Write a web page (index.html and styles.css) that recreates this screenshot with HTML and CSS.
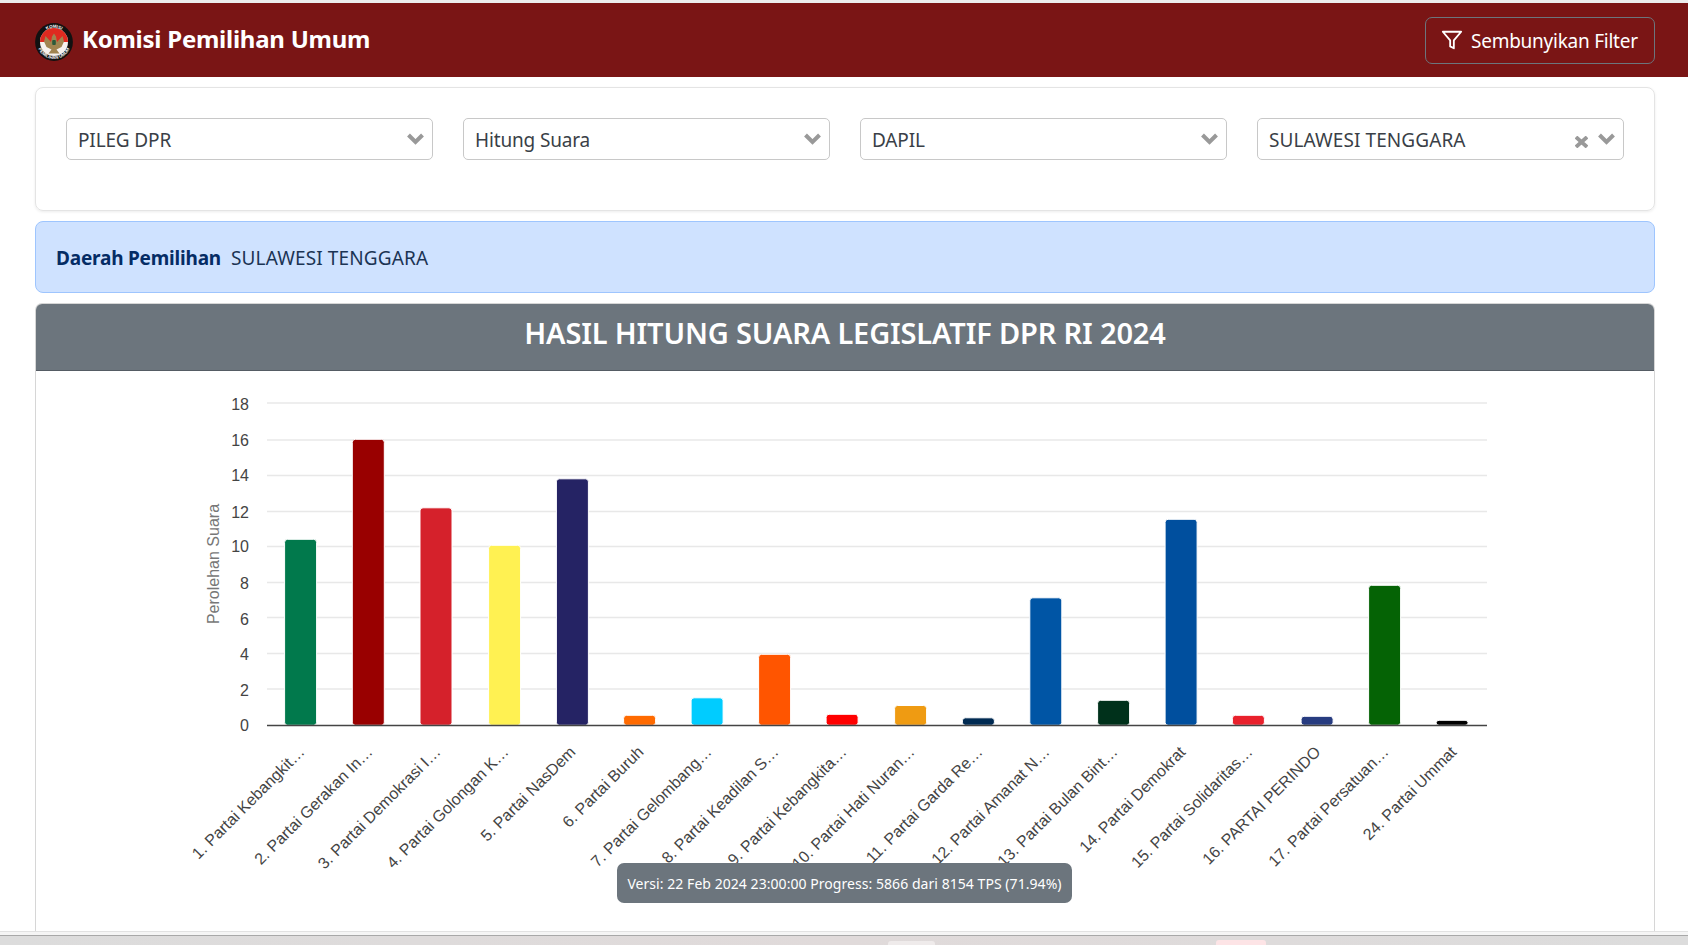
FILE: index.html
```html
<!DOCTYPE html>
<html lang="id">
<head>
<meta charset="utf-8">
<title>Komisi Pemilihan Umum</title>
<link rel="stylesheet" href="styles.css">
</head>
<body>
<div class="top-strip"></div>
<header class="navbar">
  <div class="brand">
    <svg class="logo" viewBox="0 0 38 38" aria-hidden="true">
      <defs>
        <path id="arcTop" d="M4.800 19A14.200 14.200 0 0 1 33.200 19"/>
        <path id="arcBottom" d="M2 19A17 17 0 0 0 36 19"/>
      </defs>
      <circle cx="19" cy="19" r="18.900" fill="#111"/>
      <circle cx="19" cy="19" r="14" fill="#f6f1ee"/>
      <path d="M5 19A14 14 0 0 1 33 19Z" fill="#df2a20"/>
      <path d="M19 10.500l2 3 1 5.500 5.500-6 1.500 5.500-2.500 5.500-5 2.500 3 4h-11l3-4-5-2.500-2.500-5.500 1.500-5.500 5.500 6 1-5.500z" fill="#a08450"/>
      <rect x="17.200" y="17" width="3.600" height="5" rx="1" fill="#2b5a3a"/>
      <text class="logo-text"><textPath href="#arcTop" startOffset="50%" text-anchor="middle">KOMISI</textPath></text>
      <text class="logo-text"><textPath href="#arcBottom" startOffset="50%" text-anchor="middle">PEMILIHAN UMUM</textPath></text>
    </svg>
    <span class="brand-name">Komisi Pemilihan Umum</span>
  </div>
  <button class="filter-btn" type="button">
    <svg class="funnel" viewBox="0 0 24 24" aria-hidden="true"><polygon points="22 3 2 3 10 12.460 10 19 14 21 14 12.460 22 3"/></svg>
    <span class="filter-label">Sembunyikan Filter</span>
  </button>
</header>
<main class="content">
  <section class="filter-card">
    <div class="select"><span class="select-value">PILEG DPR</span><svg class="chevron" viewBox="0 0 17 12"><path d="M1.500 2 8.500 9 15.500 2"/></svg></div>
    <div class="select"><span class="select-value">Hitung Suara</span><svg class="chevron" viewBox="0 0 17 12"><path d="M1.500 2 8.500 9 15.500 2"/></svg></div>
    <div class="select"><span class="select-value">DAPIL</span><svg class="chevron" viewBox="0 0 17 12"><path d="M1.500 2 8.500 9 15.500 2"/></svg></div>
    <div class="select"><span class="select-value select-value-wide">SULAWESI TENGGARA</span><svg class="clear" viewBox="0 0 13 12"><path d="M1 1 12 11M12 1 1 11"/></svg><svg class="chevron" viewBox="0 0 17 12"><path d="M1.500 2 8.500 9 15.500 2"/></svg></div>
  </section>
  <section class="alert"><strong>Daerah Pemilihan</strong><span>SULAWESI TENGGARA</span></section>
  <section class="chart-card">
    <h2 class="chart-title">HASIL HITUNG SUARA LEGISLATIF DPR RI 2024</h2>
    <div class="chart-body">
      <svg class="chart" viewBox="36 371 1618 560" role="img">
        <g class="grid">
          <line x1="267" x2="1487" y1="403" y2="403"/><line x1="267" x2="1487" y1="440" y2="440"/><line x1="267" x2="1487" y1="475.500" y2="475.500"/><line x1="267" x2="1487" y1="511.500" y2="511.500"/><line x1="267" x2="1487" y1="546.500" y2="546.500"/><line x1="267" x2="1487" y1="582.500" y2="582.500"/><line x1="267" x2="1487" y1="617.500" y2="617.500"/><line x1="267" x2="1487" y1="653.500" y2="653.500"/><line x1="267" x2="1487" y1="689" y2="689"/>
        </g>
        <g class="y-labels">
          <text x="249" y="410">18</text><text x="249" y="446">16</text><text x="249" y="481">14</text><text x="249" y="518">12</text><text x="249" y="552">10</text><text x="249" y="589">8</text><text x="249" y="625">6</text><text x="249" y="660">4</text><text x="249" y="696">2</text><text x="249" y="731">0</text>
        </g>
        <text class="y-title" transform="rotate(-90 219 564)" x="219" y="564">Perolehan Suara</text>
        <g class="bars">
          <rect x="285" y="540" width="32" height="186" fill="#01794c"/>
          <rect x="352.700" y="440" width="32" height="286" fill="#990000"/>
          <rect x="420.400" y="508.500" width="32" height="217.500" fill="#d5212b"/>
          <rect x="489" y="546" width="32" height="180" fill="#fff152"/>
          <rect x="556.800" y="479.500" width="32" height="246.500" fill="#252364"/>
          <rect x="624" y="716" width="32" height="10" fill="#ff6a00"/>
          <rect x="691.500" y="698.500" width="32" height="27.500" fill="#00ccff"/>
          <rect x="759" y="655" width="32" height="71" fill="#ff5500"/>
          <rect x="826.500" y="715" width="32" height="11" fill="#ff0000"/>
          <rect x="895" y="706.200" width="32" height="19.800" fill="#ef9b12"/>
          <rect x="962.800" y="718.500" width="32" height="7.500" fill="#002a52"/>
          <rect x="1030.200" y="598.500" width="32" height="127.500" fill="#0055a5"/>
          <rect x="1098" y="701" width="32" height="25" fill="#00311b"/>
          <rect x="1165.500" y="520" width="32" height="206" fill="#004f9e"/>
          <rect x="1232.800" y="716" width="32" height="10" fill="#e9212c"/>
          <rect x="1301.500" y="717" width="32" height="9" fill="#273c80"/>
          <rect x="1369" y="586" width="32" height="140" fill="#056305"/>
          <rect x="1436.500" y="721" width="32" height="5" fill="#000000"/>
        </g>
        <line class="axis" x1="267" x2="1487" y1="725.500" y2="725.500"/>
        <g class="x-labels">
          <text transform="rotate(-45 306 751)" x="306" y="751">1. Partai Kebangkit…</text>
          <text transform="rotate(-45 374 751)" x="374" y="751">2. Partai Gerakan In…</text>
          <text transform="rotate(-45 442 751)" x="442" y="751">3. Partai Demokrasi I…</text>
          <text transform="rotate(-45 510 751)" x="510" y="751">4. Partai Golongan K…</text>
          <text transform="rotate(-45 577 751)" x="577" y="751">5. Partai NasDem</text>
          <text transform="rotate(-45 645 751)" x="645" y="751">6. Partai Buruh</text>
          <text transform="rotate(-45 713 751)" x="713" y="751">7. Partai Gelombang…</text>
          <text transform="rotate(-45 780 751)" x="780" y="751">8. Partai Keadilan S…</text>
          <text transform="rotate(-45 848 751)" x="848" y="751">9. Partai Kebangkita…</text>
          <text transform="rotate(-45 916 751)" x="916" y="751">10. Partai Hati Nuran…</text>
          <text transform="rotate(-45 984 751)" x="984" y="751">11. Partai Garda Re…</text>
          <text transform="rotate(-45 1051 751)" x="1051" y="751">12. Partai Amanat N…</text>
          <text transform="rotate(-45 1119 751)" x="1119" y="751">13. Partai Bulan Bint…</text>
          <text transform="rotate(-45 1187 751)" x="1187" y="751">14. Partai Demokrat</text>
          <text transform="rotate(-45 1254 751)" x="1254" y="751">15. Partai Solidaritas…</text>
          <text transform="rotate(-45 1322 751)" x="1322" y="751">16. PARTAI PERINDO</text>
          <text transform="rotate(-45 1390 751)" x="1390" y="751">17. Partai Persatuan…</text>
          <text transform="rotate(-45 1458 751)" x="1458" y="751">24. Partai Ummat</text>
        </g>
      </svg>
      <div class="tooltip">Versi: 22 Feb 2024 23:00:00 Progress: 5866 dari 8154 TPS (71.94%)</div>
    </div>
  </section>
</main>
<div class="window-edge"></div>
<footer class="taskbar"><span class="task-tab"></span><span class="task-tab task-tab-pink"></span></footer>
</body>
</html>
```
FILE: styles.css
```css
* { box-sizing: border-box; }
html, body { margin: 0; height: 945px; overflow: hidden; background: #fff; }
body {
  display: flex;
  flex-direction: column;
  font-family: "Noto Sans", "Open Sans", sans-serif;
  color: #333;
}
.top-strip { height: 3px; background: #ececec; flex: none; }
.navbar {
  height: 74px;
  flex: none;
  background: #7a1515;
  display: flex;
  align-items: center;
  justify-content: space-between;
  padding: 0 33px 0 35px;
}
.brand { display: flex; align-items: center; gap: 9px; }
.logo { width: 38px; height: 38px; display: block; margin-top: 4px; }
.logo-text { font: 700 4.400px "Liberation Sans", sans-serif; fill: #fff; }
.brand-name { color: #fff; font-size: 24px; font-weight: 700; letter-spacing: -0.25px; margin-bottom: 4px; }
.filter-btn {
  width: 230px;
  height: 47px;
  border: 1px solid #6c757d;
  border-radius: 7px;
  background: transparent;
  color: #fff;
  font: 400 19px "Noto Sans", sans-serif;
  letter-spacing: -0.25px;
  display: flex;
  align-items: center;
  gap: 8px;
  padding: 0 0 0 15px;
}
.filter-label { padding-top: 2px; }
.funnel { width: 22px; height: 22px; fill: none; stroke: #fff; stroke-width: 2; stroke-linejoin: round; flex: none; }
.content {
  flex: 1;
  min-height: 0;
  display: flex;
  flex-direction: column;
  padding: 10px 33px 0 35px;
}
.filter-card {
  flex: none;
  height: 124px;
  border: 1px solid #e4e4e4;
  border-radius: 8px;
  box-shadow: 0 1px 3px rgba(0, 0, 0, .08);
  padding: 30px;
  display: grid;
  grid-template-columns: repeat(4, 1fr);
  gap: 30px;
  align-items: start;
}
.select {
  height: 42px;
  border: 1px solid #c8c8c8;
  border-radius: 5px;
  display: flex;
  align-items: center;
  padding: 0 8px 0 11px;
  font-size: 19px;
  color: #3a3f47;
}
.select-value { flex: 1; letter-spacing: -0.15px; position: relative; top: 1px; }
.select-value-wide { letter-spacing: 0.09px; }
.chevron { width: 17px; height: 12px; fill: none; stroke: #999; stroke-width: 4; flex: none; margin-top: -1px; }
.clear { width: 13px; height: 12px; fill: none; stroke: #999; stroke-width: 3.800; flex: none; margin: 5px 10px 0 0; }
.alert {
  flex: none;
  height: 72px;
  margin-top: 10px;
  background: #cfe2ff;
  border: 1px solid #9ec5fe;
  border-radius: 8px;
  padding: 2px 20px 0;
  display: flex;
  align-items: center;
  gap: 10px;
  font-size: 19px;
  color: #052c65;
}
.alert strong { font-weight: 700; letter-spacing: -0.2px; }
.alert span { color: #1b3454; letter-spacing: 0.13px; }
.chart-card {
  flex: 1;
  min-height: 0;
  margin-top: 10px;
  border: 1px solid #d6d6d6;
  border-bottom: 0;
  border-radius: 7px 7px 0 0;
  display: flex;
  flex-direction: column;
  overflow: hidden;
}
.chart-title {
  margin: 0;
  flex: none;
  height: 67px;
  background: #6c757d;
  border-bottom: 1px solid #555c64;
  color: #fff;
  font-size: 29px;
  font-weight: 600;
  line-height: 58px;
  text-align: center;
  letter-spacing: -0.17px;
}
.chart-body { flex: 1; position: relative; min-height: 0; }
.chart { display: block; width: 1618px; height: 560px; font-family: "Liberation Sans", sans-serif; }
.grid line { stroke: #e8e8e8; stroke-width: 1.500; }
.y-labels text { font-size: 16px; fill: #444; text-anchor: end; }
.y-title { font-size: 16px; fill: #777; text-anchor: middle; }
.bars { transform: translate(-0.4px, -0.7px); }
.bars rect { stroke: #fff; stroke-width: 1; rx: 3px; }
.axis { stroke: #444; stroke-width: 1.500; }
.x-labels { transform: translate(-0.5px, 2px); }
.x-labels text { font-size: 16px; fill: #444; text-anchor: end; }
.tooltip {
  position: absolute;
  left: 581px;
  top: 492px;
  width: 455px;
  height: 40px;
  background: #6c757d;
  border-radius: 7px;
  color: #fff;
  font-size: 14px;
  line-height: 41px;
  text-align: center;
  white-space: nowrap;
  letter-spacing: 0.05px;
}
.window-edge { flex: none; height: 4px; background: #f5f5f5; border-top: 1px solid #e2e2e2; }
.taskbar {
  flex: none;
  height: 10px;
  border-top: 1px solid #a8a8a8;
  background: linear-gradient(90deg, #dcdcdc 0%, #e0dada 50%, #dcdcdc 100%);
  display: flex;
  align-items: flex-end;
  padding-left: 888px;
  gap: 281px;
}
.task-tab { width: 47px; height: 4px; background: #efebeb; border-radius: 3px 3px 0 0; }
.task-tab-pink { width: 50px; height: 5px; background: #fde4e6; }
```
